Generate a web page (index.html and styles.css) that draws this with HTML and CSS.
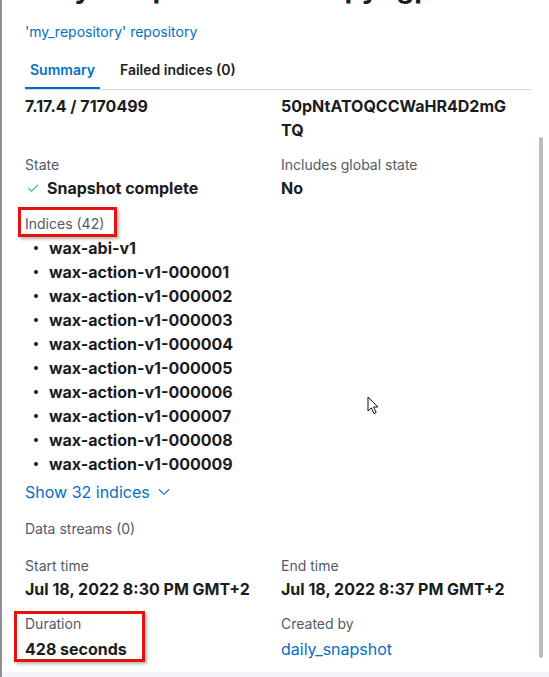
FILE: index.html
```html
<!DOCTYPE html>
<html lang="en">
<head>
<meta charset="utf-8">
<title>Snapshot details</title>
<link rel="stylesheet" href="styles.css">
</head>
<body>
<div class="flyout">
  <header class="header">
    <h1 class="title">daily-snap-2022.07.18-py8gp</h1>
    <a class="repo-link" href="#">'my_repository' repository</a>
    <nav class="tabs">
      <span class="tab tab-active">Summary</span>
      <span class="tab">Failed indices (0)</span>
    </nav>
  </header>
  <div class="body">
    <div class="content">
      <div class="row">
        <div class="cell"><div class="value">7.17.4 / 7170499</div></div>
        <div class="cell"><div class="value">50pNtATOQCCWaHR4D2mGTQ</div></div>
      </div>
      <div class="row">
        <div class="cell">
          <div class="label">State</div>
          <div class="value state">
            <svg class="check" width="12" height="12" viewBox="0 0 12 12"><path d="M1.5 6.2 L4.6 9.2 L10.8 2.8" fill="none" stroke="#2db3a6" stroke-width="1.1"/></svg>
            Snapshot complete
          </div>
        </div>
        <div class="cell">
          <div class="label">Includes global state</div>
          <div class="value">No</div>
        </div>
      </div>
      <div class="section indices-section">
        <div class="label"><span class="annot annot-indices">Indices (42)</span></div>
        <ul class="indices">
          <li>wax-abi-v1</li>
          <li>wax-action-v1-000001</li>
          <li>wax-action-v1-000002</li>
          <li>wax-action-v1-000003</li>
          <li>wax-action-v1-000004</li>
          <li>wax-action-v1-000005</li>
          <li>wax-action-v1-000006</li>
          <li>wax-action-v1-000007</li>
          <li>wax-action-v1-000008</li>
          <li>wax-action-v1-000009</li>
        </ul>
        <a class="show-more" href="#">Show 32 indices
          <svg class="chev" width="12" height="8" viewBox="0 0 12 8"><path d="M1 1.5 L6 6.3 L11 1.5" fill="none" stroke="#0071c2" stroke-width="1.1"/></svg>
        </a>
      </div>
      <div class="section streams">
        <div class="label">Data streams (0)</div>
      </div>
      <div class="row">
        <div class="cell">
          <div class="label">Start time</div>
          <div class="value">Jul 18, 2022 8:30 PM GMT+2</div>
        </div>
        <div class="cell">
          <div class="label">End time</div>
          <div class="value">Jul 18, 2022 8:37 PM GMT+2</div>
        </div>
      </div>
      <div class="row last-row">
        <div class="cell annot annot-duration">
          <div class="label">Duration</div>
          <div class="value">428 seconds</div>
        </div>
        <div class="cell">
          <div class="label">Created by</div>
          <a class="value link" href="#">daily_snapshot</a>
        </div>
      </div>
    </div>
    <div class="scroll-track"><div class="scroll-thumb"></div></div>
  </div>
  <div class="footer-band"></div>
  <svg class="cursor" width="14" height="20" viewBox="0 0 14 20"><path d="M1 1 L1 15 L4.3 11.9 L7 17.6 L9.2 16.6 L6.6 11 L11 11 Z" fill="#fff" stroke="#111" stroke-width="1" stroke-linejoin="round"/></svg>
</div>
</body>
</html>
```
FILE: styles.css
```css
*, *::before, *::after { box-sizing: border-box; }
html, body { margin: 0; padding: 0; background: #fff; }
body {
  font-family: Inter, "Noto Sans", "Liberation Sans", sans-serif;
  color: #1a1c21;
  width: 549px;
  height: 677px;
  overflow: hidden;
}
.flyout {
  position: relative;
  height: 677px;
  border-left: 2px solid #8d8f94;
  display: flex;
  flex-direction: column;
  overflow: hidden;
}
.header {
  padding: 0 17px 0 23px;
  flex: none;
}
.title {
  margin: -26px 0 0;
  font-size: 28px;
  line-height: 28px;
  font-weight: 700;
  color: #1a1c21;
  white-space: nowrap;
}
.repo-link {
  display: block;
  margin-top: 20px;
  font-size: 14px;
  line-height: 20px;
  color: #0071c2;
  text-decoration: none;
}
.tabs {
  display: flex;
  gap: 15px;
  margin-top: 8px;
  height: 40px;
  border-bottom: 1px solid #d3dae6;
}
.tab {
  display: flex;
  align-items: center;
  padding: 0 5px;
  font-size: 14px;
  font-weight: 600;
  color: #1a1c21;
}
.tab-active {
  color: #0071c2;
  box-shadow: inset 0 -2px 0 #0071c2;
}
.body {
  flex: 1;
  display: flex;
  min-height: 0;
}
.content {
  flex: 1;
  padding: 4px 0 0 23px;
}
.row {
  display: grid;
  grid-template-columns: 233px 229px;
  column-gap: 23px;
  margin-bottom: 13px;
}
.label {
  font-size: 14px;
  line-height: 20px;
  color: #535966;
}
.value {
  display: block;
  margin-top: 1px;
  font-size: 16px;
  line-height: 24px;
  font-weight: 700;
  color: #1a1c21;
  word-break: break-all;
}
.row:first-child .value { margin-top: 0; }
.last-row .value { margin-top: 3px; }
.link { color: #0071c2; font-weight: 400; text-decoration: none; }
.state { display: flex; align-items: center; gap: 8px; padding-left: 2px; }
.check { flex: none; }
.section { margin-bottom: 15px; }
.indices-section { padding-top: 1px; }
.indices {
  list-style: none;
  margin: 2px 0 0;
  padding: 0;
}
.indices li {
  display: flex;
  align-items: center;
  font-size: 16px;
  line-height: 24px;
  font-weight: 700;
  color: #1a1c21;
}
.indices li::before {
  content: "";
  width: 4px;
  height: 4px;
  border-radius: 50%;
  background: #1a1c21;
  margin: 0 11px 0 9px;
  flex: none;
}
.show-more {
  display: flex;
  align-items: center;
  gap: 8px;
  margin-top: 4px;
  font-size: 16px;
  line-height: 24px;
  color: #0071c2;
  text-decoration: none;
}
.streams { margin-bottom: 17px; }
.annot { position: relative; display: inline-block; }
.annot::after {
  content: "";
  position: absolute;
  border: 3px solid #e5120e;
  box-shadow: 2px 2px 3px rgba(0,0,0,0.3);
  pointer-events: none;
}
.annot-indices::after { left: -7px; top: -7px; right: -13px; bottom: -3px; }
.annot-duration { display: block; }
.annot-duration::after { left: -11px; top: -3px; width: 131px; height: 51px; }
.scroll-track {
  flex: none;
  width: 10px;
  margin-right: 2px;
  padding-top: 47px;
}
.scroll-thumb {
  width: 4px;
  margin-left: 2px;
  height: 521px;
  border-radius: 2px;
  background: #b8bcc4;
}
.footer-band {
  flex: none;
  height: 5px;
  background: #f3f5f9;
}
.cursor {
  position: absolute;
  left: 365px;
  top: 396px;
}
```
